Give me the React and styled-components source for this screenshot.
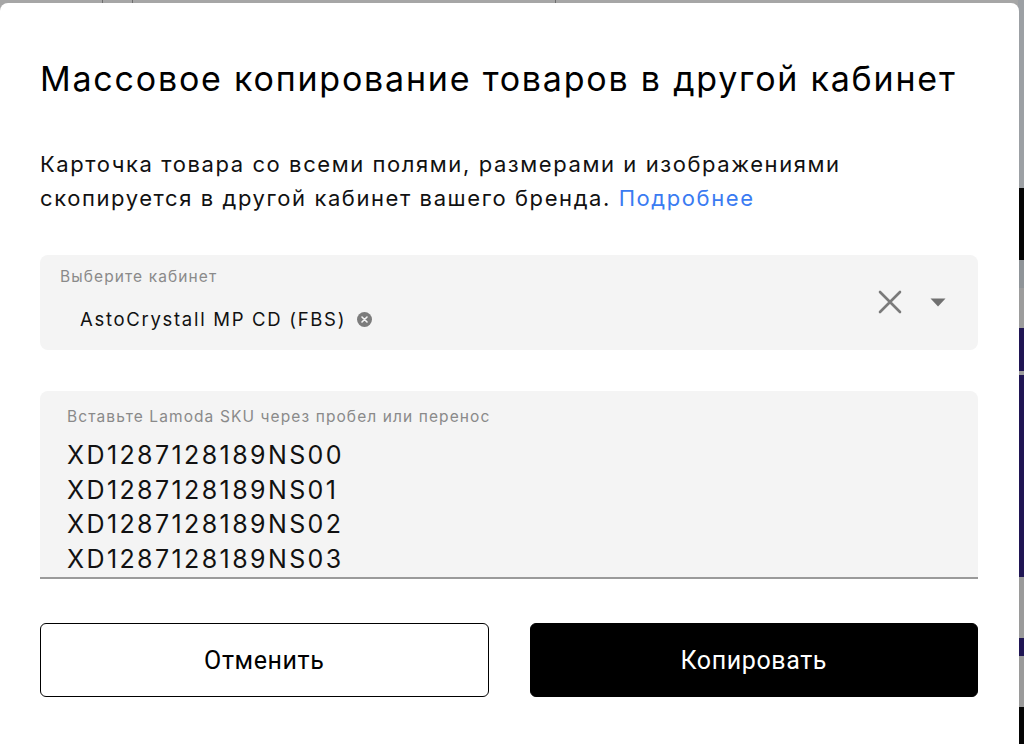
import React from "react";
import styled, { createGlobalStyle } from "styled-components";

const Global = createGlobalStyle`
  html, body { margin: 0; padding: 0; }
  body { font-family: Inter, "Noto Sans", sans-serif; background: #a6a6a6; }
  * { box-sizing: border-box; }
`;

const Page = styled.div`
  position: relative;
  width: 1024px;
  height: 744px;
  overflow: hidden;
  background: #a6a6a6;
  display: flex;
  justify-content: flex-end;
`;

const TopTicks = styled.div`
  position: absolute;
  left: 0;
  top: 0;
  width: 100%;
  height: 4px;
`;

const Tick = styled.span`
  position: absolute;
  top: 0;
  width: 1px;
  height: 4px;
  background: #6e6e6e;
`;

const SideStrip = styled.div`
  width: 6px;
  height: 100%;
  display: flex;
  flex-direction: column;
`;

const Band = styled.div`
  height: ${(p) => p.$h}px;
  background: ${(p) => p.$c};
  flex-shrink: 0;
`;

const Dialog = styled.div`
  position: absolute;
  left: 0;
  top: 3px;
  width: 1019px;
  height: 760px;
  background: #ffffff;
  border-radius: 8px;
  padding: 52px 41px 0 40px;
  display: flex;
  flex-direction: column;
`;

const Title = styled.h1`
  margin: 0;
  font-family: Inter, "Noto Sans", sans-serif;
  font-weight: 400;
  font-size: 34px;
  line-height: 48px;
  color: #000;
  letter-spacing: 1.78px;
  white-space: nowrap;
`;

const Description = styled.p`
  margin: 44px 0 0;
  font-size: 22px;
  line-height: 34px;
  color: #111;
  font-weight: 400;
  letter-spacing: 1.58px;
`;

const Link = styled.a`
  color: #3a7bf2;
  text-decoration: none;
`;

const SelectBox = styled.div`
  margin-top: 40px;
  height: 95px;
  background: #f4f4f4;
  border-radius: 8px;
  padding: 12px 32px 0 20px;
  display: flex;
  align-items: flex-start;
`;

const SelectMain = styled.div`
  flex: 1;
  display: flex;
  flex-direction: column;
`;

const FieldLabel = styled.div`
  font-size: 15.5px;
  line-height: 20px;
  color: #8a8a8a;
  letter-spacing: ${(p) => p.$ls || 1.1}px;
`;

const Chip = styled.div`
  margin: 20px 0 0 20px;
  display: flex;
  align-items: center;
  gap: 11px;
  font-size: 18.5px;
  line-height: 24px;
  color: #111;
  letter-spacing: 1.7px;
`;

const ChipClear = styled.span`
  width: 15px;
  height: 15px;
  border-radius: 50%;
  background: #7c7c7c;
  display: inline-flex;
  align-items: center;
  justify-content: center;
`;

const Controls = styled.div`
  display: flex;
  align-items: center;
  gap: 28px;
  margin-top: 23px;
`;

const IconBtn = styled.span`
  display: inline-flex;
  align-items: center;
  justify-content: center;
`;

const TextAreaBox = styled.div`
  margin-top: 41px;
  height: 188px;
  background: #f4f4f4;
  border-radius: 8px 8px 0 0;
  border-bottom: 2px solid #9a9a9a;
  padding: 16px 27px 0;
  display: flex;
  flex-direction: column;
  overflow: hidden;
`;

const SkuList = styled.div`
  margin-top: 11px;
  font-size: 25px;
  line-height: 34.5px;
  color: #111;
  letter-spacing: 2.4px;
`;

const Buttons = styled.div`
  margin-top: 44px;
  display: grid;
  grid-template-columns: 1fr 1fr;
  gap: 41px;
`;

const Button = styled.button`
  height: 74px;
  border-radius: 6px;
  font-family: Roboto, "Liberation Sans", sans-serif;
  font-size: 25px;
  font-weight: 400;
  letter-spacing: 0.6px;
  cursor: pointer;
  border: 1.5px solid #000;
  background: ${(p) => (p.$primary ? "#000" : "#fff")};
  color: ${(p) => (p.$primary ? "#fff" : "#000")};
`;

const bands = [
  [188, "#9ca0a4"],
  [72, "#050505"],
  [28, "#8f9498"],
  [40, "#9c9c9c"],
  [43, "#1f1553"],
  [4, "#9c9c9c"],
  [202, "#1f1553"],
  [61, "#9a9a9a"],
  [18, "#1f1553"],
  [51, "#9a9a9a"],
  [37, "#050505"],
];

const skus = [
  "XD1287128189NS00",
  "XD1287128189NS01",
  "XD1287128189NS02",
  "XD1287128189NS03",
];

export default function App() {
  return (
    <Page>
      <Global />
      <TopTicks>
        <Tick style={{ left: 102 }} />
        <Tick style={{ left: 132 }} />
        <Tick style={{ left: 555 }} />
      </TopTicks>
      <SideStrip>
        {bands.map(([h, c], i) => (
          <Band key={i} $h={h} $c={c} />
        ))}
      </SideStrip>
      <Dialog>
        <Title>Массовое копирование товаров в другой кабинет</Title>
        <Description>
          Карточка товара со всеми полями, размерами и изображениями
          <br />
          скопируется в другой кабинет вашего бренда.{" "}
          <Link href="#">Подробнее</Link>
        </Description>
        <SelectBox>
          <SelectMain>
            <FieldLabel>Выберите кабинет</FieldLabel>
            <Chip>
              AstoCrystall MP CD (FBS)
              <ChipClear>
                <svg width="7" height="7" viewBox="0 0 7 7">
                  <path d="M1 1L6 6M6 1L1 6" stroke="#f4f4f4" strokeWidth="1.6" strokeLinecap="round" />
                </svg>
              </ChipClear>
            </Chip>
          </SelectMain>
          <Controls>
            <IconBtn>
              <svg width="24" height="24" viewBox="0 0 24 24">
                <path d="M2 2L22 22M22 2L2 22" stroke="#7a7a7a" strokeWidth="2.6" strokeLinecap="round" />
              </svg>
            </IconBtn>
            <IconBtn>
              <svg width="16" height="9" viewBox="0 0 16 9">
                <path d="M0.5 0.5H15.5L8 8.5Z" fill="#707070" />
              </svg>
            </IconBtn>
          </Controls>
        </SelectBox>
        <TextAreaBox>
          <FieldLabel $ls={1.1}>Вставьте Lamoda SKU через пробел или перенос</FieldLabel>
          <SkuList>
            {skus.map((s) => (
              <div key={s}>{s}</div>
            ))}
          </SkuList>
        </TextAreaBox>
        <Buttons>
          <Button>Отменить</Button>
          <Button $primary>Копировать</Button>
        </Buttons>
      </Dialog>
    </Page>
  );
}
